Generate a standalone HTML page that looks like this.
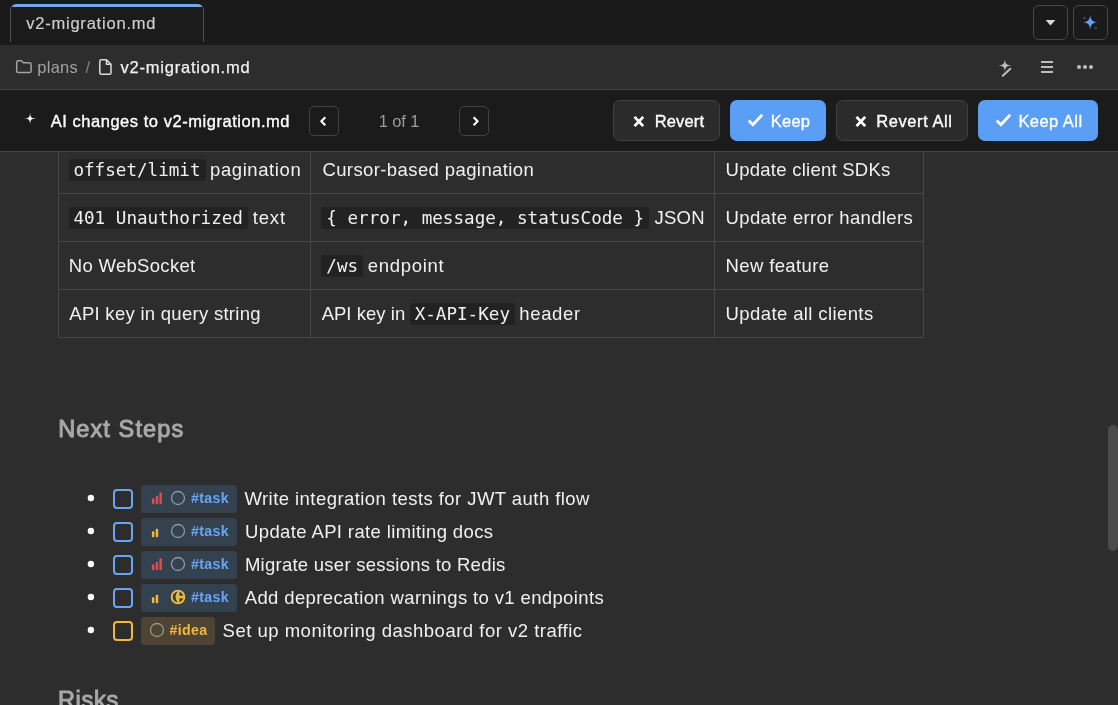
<!DOCTYPE html>
<html><head><meta charset="utf-8">
<style>
*{box-sizing:border-box;margin:0;padding:0}
html,body{width:1118px;height:705px;overflow:hidden;background:#2d2d2d}
body{font-family:"Liberation Sans",sans-serif;color:#f0f0f0;position:relative}
#txt{position:absolute;left:0;top:0;width:1118px;height:705px;will-change:transform}
.abs{position:absolute}
.t{position:absolute;white-space:nowrap;line-height:1}
.code{position:absolute;height:21.600px;background:#222222;border-radius:3px;font-family:"DejaVu Sans Mono","Liberation Mono",monospace;font-size:17.5px;line-height:21px;color:#f1f1f1;text-align:center;white-space:pre}
#topbar{left:0;top:0;width:1118px;height:45px;background:#1a1a1a}
#tab{left:10px;top:4px;width:194px;height:38px;background:#1b1b1b;border:1px solid #515151;border-bottom:none;border-top:none;border-radius:6px 6px 0 0;overflow:hidden}
#tab:before{content:"";position:absolute;left:0;top:0;right:0;height:2.500px;background:#78a5e8;box-shadow:0 1px 0 #0d1a30}
.sqbtn{width:35px;height:35px;border:1px solid #484848;border-radius:6px;background:#1a1a1a}
#crumb{left:0;top:45px;width:1118px;height:45px;background:#2d2d2d;border-bottom:1px solid #424242}
#aibar{left:0;top:90px;width:1118px;height:62px;background:#1b1b1b;border-bottom:1px solid #454545}
.navbtn{width:30px;height:30px;border:1px solid #424242;border-radius:5px;background:#1b1b1b;top:106px}
.btn{height:41px;border-radius:7px;top:100px}
.btn.dark{background:#2b2b2b;border:1px solid #414141}
.btn.blue{background:#5a9ef5}
.hl{background:#474747;height:1px;left:58px;width:866px}
.vl{background:#474747;width:1px;top:152px;height:186px}
.bullet{width:6.4px;height:6.4px;border-radius:50%;background:#f0f0f0;left:87.7px}
.cb{left:113px;width:20px;height:20px;border:2px solid #69a5f3;border-radius:4px}
.cb.y{border-color:#f2b83c}
.pill{left:141px;height:28px;border-radius:3.500px;background:#34414f}
.pill.y{background:#4e4433}
</style></head><body>

<div id="topbar" class="abs"></div>
<div id="tab" class="abs"></div>
<div class="abs sqbtn" style="left:1033px;top:5px">
  <svg class="abs" style="left:-1px;top:-1px" width="35" height="35" viewBox="0 0 35 35"><path d="M12.600 15h9.800l-4.900 5.600z" fill="#d8d8d8"/></svg>
</div>
<div class="abs sqbtn" style="left:1073px;top:5px">
  <svg class="abs" style="left:-1px;top:-1px" width="35" height="35" viewBox="0 0 35 35"><path d="M17.20 9.80C17.61 14.83 19.38 16.76 24.00 17.20C19.38 17.64 17.61 19.57 17.20 24.60C16.79 19.57 15.02 17.64 10.40 17.20C15.02 16.76 16.79 14.83 17.20 9.80z" fill="#5ea2f7"/><circle cx="11.3" cy="13" r="1.1" fill="#3f5f8f"/><circle cx="22.800" cy="23" r="1.100" fill="#3f5f8f"/></svg>
</div>

<div id="crumb" class="abs"></div>
<svg class="abs" style="left:15px;top:59px" width="18" height="16" viewBox="0 0 18 16"><path d="M1.700 3.300c0-.9.700-1.600 1.600-1.600h3.200l1.800 2h6.200c.9 0 1.600.7 1.600 1.600v6.700c0 .9-.7 1.600-1.600 1.600H3.300c-.9 0-1.600-.7-1.600-1.600z" fill="none" stroke="#a3a3a3" stroke-width="1.500" stroke-linejoin="round"/></svg>
<svg class="abs" style="left:98px;top:58px" width="16" height="18" viewBox="0 0 16 18"><path d="M3.300 1.750h5.200l4.500 4.500v8.500c0 .8-.7 1.500-1.500 1.500h-8.200c-.8 0-1.500-.7-1.500-1.500v-11.500c0-.8.700-1.500 1.500-1.500z M8.500 1.750v4.500h4.500" fill="none" stroke="#dcdcdc" stroke-width="1.500" stroke-linejoin="round"/></svg>
<svg class="abs" style="left:995px;top:55px" width="24" height="26" viewBox="0 0 24 26"><path d="M9.90 4.00C10.16 8.74 11.59 10.14 16.40 10.40C11.59 10.66 10.16 12.06 9.90 16.80C9.64 12.06 8.21 10.66 3.40 10.40C8.21 10.14 9.64 8.74 9.90 4.00z" fill="#bdbdbd"/><path d="M7.800 20.700l7.500-6.900" stroke="#bdbdbd" stroke-width="2.100" stroke-linecap="round"/></svg>
<div class="abs" style="left:1041px;top:61px;width:12px;height:2px;background:#bdbdbd"></div>
<div class="abs" style="left:1041px;top:66px;width:12px;height:2px;background:#bdbdbd"></div>
<div class="abs" style="left:1041px;top:71px;width:12px;height:2px;background:#bdbdbd"></div>
<div class="abs" style="left:1077px;top:65px;width:3.800px;height:3.800px;border-radius:50%;background:#bdbdbd"></div>
<div class="abs" style="left:1083px;top:65px;width:3.800px;height:3.800px;border-radius:50%;background:#bdbdbd"></div>
<div class="abs" style="left:1089px;top:65px;width:3.800px;height:3.800px;border-radius:50%;background:#bdbdbd"></div>

<div id="aibar" class="abs"></div>
<svg class="abs" style="left:22px;top:111px" width="16" height="16" viewBox="0 0 16 16"><path d="M8.10 1.50C8.34 6.30 9.30 7.26 14.10 7.50C9.30 7.74 8.34 8.70 8.10 13.50C7.86 8.70 6.90 7.74 2.10 7.50C6.90 7.26 7.86 6.30 8.10 1.50z" fill="#fff"/></svg>
<div class="abs navbtn" style="left:309px"><svg class="abs" style="left:8px;top:8px" width="12" height="12" viewBox="0 0 12 12"><path d="M7.300 2.200L3.300 6.200l4 4" fill="none" stroke="#fff" stroke-width="2.200" stroke-linejoin="round"/></svg></div>
<div class="abs navbtn" style="left:459px"><svg class="abs" style="left:8px;top:8px" width="12" height="12" viewBox="0 0 12 12"><path d="M5.600 2.200l4 4-4 4" fill="none" stroke="#fff" stroke-width="2.200" stroke-linejoin="round"/></svg></div>

<div class="abs btn dark" style="left:613px;width:107px">
  <svg class="abs" style="left:18.5px;top:14.4px" width="12" height="13" viewBox="0 0 12 13"><path d="M1.500 1.900l8.700 9.200M10.200 1.900l-8.700 9.200" stroke="#fff" stroke-width="2.800"/></svg>
</div>
<div class="abs btn blue" style="left:730px;width:96px">
  <svg class="abs" style="left:16.5px;top:13.3px" width="17" height="14" viewBox="0 0 17 14"><path d="M1.700 7.600l4.200 4.200L15.200 1.800" fill="none" stroke="#fff" stroke-width="2.800"/></svg>
</div>
<div class="abs btn dark" style="left:836px;width:132px">
  <svg class="abs" style="left:17.7px;top:14.4px" width="12" height="13" viewBox="0 0 12 13"><path d="M1.500 1.900l8.700 9.200M10.200 1.900l-8.700 9.200" stroke="#fff" stroke-width="2.800"/></svg>
</div>
<div class="abs btn blue" style="left:978px;width:120px">
  <svg class="abs" style="left:16.5px;top:13.3px" width="17" height="14" viewBox="0 0 17 14"><path d="M1.700 7.600l4.200 4.200L15.200 1.800" fill="none" stroke="#fff" stroke-width="2.800"/></svg>
</div>

<!-- table lines -->
<div class="abs vl" style="left:58px"></div>
<div class="abs vl" style="left:310px"></div>
<div class="abs vl" style="left:714px"></div>
<div class="abs vl" style="left:923px"></div>
<div class="abs hl" style="top:193px"></div>
<div class="abs hl" style="top:241px"></div>
<div class="abs hl" style="top:289px"></div>
<div class="abs hl" style="top:337px"></div>

<svg class="abs" style="left:86px;top:493.1px" width="10" height="10" viewBox="0 0 10 10"><circle cx="4.900" cy="5" r="3.200" fill="#fafafa"/></svg>
<div class="abs cb" style="top:489.0px"></div>
<div class="abs pill" style="top:485.0px;width:96px"></div>
<svg class="abs" style="left:151px;top:490.9px" width="12" height="14" viewBox="0 0 12 14"><rect x="0.900" y="7.200" width="2.500" height="6" rx="1" fill="#e5484d"/><rect x="4.700" y="4.800" width="2.500" height="8.400" rx="1" fill="#e5484d"/><rect x="8.400" y="1.200" width="2.500" height="12" rx="1" fill="#e5484d"/></svg>
<svg class="abs" style="left:170.2px;top:490.1px" width="16" height="16" viewBox="0 0 16 16"><circle cx="8" cy="8" r="6.500" fill="none" stroke="#8e98a6" stroke-width="1.300"/></svg>
<svg class="abs" style="left:86px;top:526.1px" width="10" height="10" viewBox="0 0 10 10"><circle cx="4.900" cy="5" r="3.200" fill="#fafafa"/></svg>
<div class="abs cb" style="top:522.0px"></div>
<div class="abs pill" style="top:518.0px;width:96px"></div>
<svg class="abs" style="left:151px;top:523.9px" width="12" height="14" viewBox="0 0 12 14"><rect x="0.900" y="7.200" width="2.500" height="6" rx="1" fill="#f2b83c"/><rect x="4.700" y="4.800" width="2.500" height="8.400" rx="1" fill="#f2b83c"/></svg>
<svg class="abs" style="left:170.2px;top:523.1px" width="16" height="16" viewBox="0 0 16 16"><circle cx="8" cy="8" r="6.500" fill="none" stroke="#8e98a6" stroke-width="1.300"/></svg>
<svg class="abs" style="left:86px;top:559.1px" width="10" height="10" viewBox="0 0 10 10"><circle cx="4.900" cy="5" r="3.200" fill="#fafafa"/></svg>
<div class="abs cb" style="top:555.0px"></div>
<div class="abs pill" style="top:551.0px;width:96px"></div>
<svg class="abs" style="left:151px;top:556.9px" width="12" height="14" viewBox="0 0 12 14"><rect x="0.900" y="7.200" width="2.500" height="6" rx="1" fill="#e5484d"/><rect x="4.700" y="4.800" width="2.500" height="8.400" rx="1" fill="#e5484d"/><rect x="8.400" y="1.200" width="2.500" height="12" rx="1" fill="#e5484d"/></svg>
<svg class="abs" style="left:170.2px;top:556.1px" width="16" height="16" viewBox="0 0 16 16"><circle cx="8" cy="8" r="6.500" fill="none" stroke="#8e98a6" stroke-width="1.300"/></svg>
<svg class="abs" style="left:86px;top:592.1px" width="10" height="10" viewBox="0 0 10 10"><circle cx="4.900" cy="5" r="3.200" fill="#fafafa"/></svg>
<div class="abs cb" style="top:588.0px"></div>
<div class="abs pill" style="top:584.0px;width:96px"></div>
<svg class="abs" style="left:151px;top:589.9px" width="12" height="14" viewBox="0 0 12 14"><rect x="0.900" y="7.200" width="2.500" height="6" rx="1" fill="#f2b83c"/><rect x="4.700" y="4.800" width="2.500" height="8.400" rx="1" fill="#f2b83c"/></svg>
<svg class="abs" style="left:170.2px;top:589.1px" width="16" height="16" viewBox="0 0 16 16"><circle cx="8" cy="8" r="6.350" fill="none" stroke="#efb93f" stroke-width="1.900"/><path d="M8.600 1.800Q2.400 8 8.600 14.200z" fill="#efb93f"/><path d="M8.400 1.800v12.400" stroke="#efb93f" stroke-width="2"/><path d="M8 8h6.200" stroke="#efb93f" stroke-width="2.500"/></svg>
<svg class="abs" style="left:86px;top:625.1px" width="10" height="10" viewBox="0 0 10 10"><circle cx="4.900" cy="5" r="3.200" fill="#fafafa"/></svg>
<div class="abs cb y" style="top:621.0px"></div>
<div class="abs pill y" style="top:617.0px;width:74px"></div>
<svg class="abs" style="left:149px;top:622.1px" width="16" height="16" viewBox="0 0 16 16"><circle cx="8" cy="8" r="6.500" fill="none" stroke="#9a948a" stroke-width="1.300"/></svg>

<div class="abs" style="left:1107.800px;top:424.600px;width:10.600px;height:126.500px;border-radius:5.300px;background:#4b4b4b"></div>

<div id="txt">
<div class="code" style="left:409.70px;top:303.00px;width:105.20px;"></div>
<div class="code" style="left:321.40px;top:255.00px;width:41.70px;"></div>
<div class="code" style="left:321.40px;top:207.00px;width:328.00px;"></div>
<div class="code" style="left:68.50px;top:207.00px;width:179.10px;"></div>
<div class="code" style="left:68.50px;top:159.00px;width:137.20px;"></div>
<span id="t_tab" class="t" style="left:26.14px;top:15.23px;font-size:16.5px;color:#d0d0d0;letter-spacing:0.790px;-webkit-text-stroke:0.15px #d0d0d0;">v2-migration.md</span>
<span id="t_plans" class="t" style="left:37.30px;top:59.13px;font-size:16.5px;color:#a3a3a3;letter-spacing:0.260px;">plans</span>
<span id="t_slash" class="t" style="left:85.38px;top:59.13px;font-size:16.5px;color:#808080;letter-spacing:0.000px;">/</span>
<span id="t_file" class="t" style="left:120.54px;top:59.13px;font-size:16.5px;color:#f2f2f2;letter-spacing:0.773px;-webkit-text-stroke:0.25px #f2f2f2;">v2-migration.md</span>
<span id="t_ai" class="t" style="left:50.70px;top:113.03px;font-size:16.5px;color:#ffffff;letter-spacing:0.537px;-webkit-text-stroke:0.35px #ffffff;">AI changes to v2-migration.md</span>
<span id="t_1of1" class="t" style="left:378.84px;top:113.03px;font-size:16.5px;color:#9c9c9c;letter-spacing:-0.156px;">1 of 1</span>
<span id="t_rev" class="t" style="left:654.63px;top:113.03px;font-size:16.5px;color:#ffffff;letter-spacing:0.156px;-webkit-text-stroke:0.35px #ffffff;">Revert</span>
<span id="t_keep" class="t" style="left:770.84px;top:113.03px;font-size:16.5px;color:#ffffff;letter-spacing:0.218px;-webkit-text-stroke:0.35px #ffffff;">Keep</span>
<span id="t_revall" class="t" style="left:876.36px;top:113.03px;font-size:16.5px;color:#ffffff;letter-spacing:0.551px;-webkit-text-stroke:0.35px #ffffff;">Revert All</span>
<span id="t_keepall" class="t" style="left:1018.38px;top:113.03px;font-size:16.5px;color:#ffffff;letter-spacing:0.456px;-webkit-text-stroke:0.35px #ffffff;">Keep All</span>
<span id="c11" class="t" style="left:210.08px;top:161.04px;font-size:18.5px;color:#f1f1f1;letter-spacing:0.579px;">pagination</span>
<span id="c12" class="t" style="left:322.39px;top:161.04px;font-size:18.5px;color:#f1f1f1;letter-spacing:0.401px;">Cursor-based pagination</span>
<span id="c13" class="t" style="left:725.62px;top:161.04px;font-size:18.5px;color:#f1f1f1;letter-spacing:0.253px;">Update client SDKs</span>
<span id="c21" class="t" style="left:252.84px;top:209.04px;font-size:18.5px;color:#f1f1f1;letter-spacing:0.799px;">text</span>
<span id="c22" class="t" style="left:654.59px;top:209.04px;font-size:18.5px;color:#f1f1f1;letter-spacing:0.194px;">JSON</span>
<span id="c23" class="t" style="left:725.62px;top:209.04px;font-size:18.5px;color:#f1f1f1;letter-spacing:0.358px;">Update error handlers</span>
<span id="c31" class="t" style="left:68.76px;top:257.04px;font-size:18.5px;color:#f1f1f1;letter-spacing:0.306px;">No WebSocket</span>
<span id="c32" class="t" style="left:367.75px;top:257.04px;font-size:18.5px;color:#f1f1f1;letter-spacing:0.697px;">endpoint</span>
<span id="c33" class="t" style="left:725.50px;top:257.04px;font-size:18.5px;color:#f1f1f1;letter-spacing:0.374px;">New feature</span>
<span id="c41" class="t" style="left:69.29px;top:305.04px;font-size:18.5px;color:#f1f1f1;letter-spacing:0.281px;">API key in query string</span>
<span id="c42a" class="t" style="left:321.64px;top:305.04px;font-size:18.5px;color:#f1f1f1;letter-spacing:0.031px;">API key in</span>
<span id="c42b" class="t" style="left:519.37px;top:305.04px;font-size:18.5px;color:#f1f1f1;letter-spacing:0.616px;">header</span>
<span id="c43" class="t" style="left:725.62px;top:305.04px;font-size:18.5px;color:#f1f1f1;letter-spacing:0.391px;">Update all clients</span>
<span id="l1" class="t" style="left:244.45px;top:489.64px;font-size:18.5px;color:#f1f1f1;letter-spacing:0.442px;">Write integration tests for JWT auth flow</span>
<span id="l2" class="t" style="left:245.04px;top:522.64px;font-size:18.5px;color:#f1f1f1;letter-spacing:0.373px;">Update API rate limiting docs</span>
<span id="l3" class="t" style="left:244.90px;top:555.64px;font-size:18.5px;color:#f1f1f1;letter-spacing:0.258px;">Migrate user sessions to Redis</span>
<span id="l4" class="t" style="left:244.71px;top:588.64px;font-size:18.5px;color:#f1f1f1;letter-spacing:0.370px;">Add deprecation warnings to v1 endpoints</span>
<span id="l5" class="t" style="left:222.55px;top:621.64px;font-size:18.5px;color:#f1f1f1;letter-spacing:0.501px;">Set up monitoring dashboard for v2 traffic</span>
<span id="g1" class="t" style="left:190.93px;top:491.38px;font-size:14.2px;color:#69a5f3;letter-spacing:0.389px;font-weight:bold;">#task</span>
<span id="g2" class="t" style="left:190.93px;top:524.38px;font-size:14.2px;color:#69a5f3;letter-spacing:0.389px;font-weight:bold;">#task</span>
<span id="g3" class="t" style="left:190.93px;top:557.38px;font-size:14.2px;color:#69a5f3;letter-spacing:0.389px;font-weight:bold;">#task</span>
<span id="g4" class="t" style="left:190.93px;top:590.38px;font-size:14.2px;color:#69a5f3;letter-spacing:0.389px;font-weight:bold;">#task</span>
<span id="g5" class="t" style="left:169.54px;top:623.38px;font-size:14.2px;color:#f2b83c;letter-spacing:0.313px;font-weight:bold;">#idea</span>
<span id="h1" class="t" style="left:58.14px;top:418.11px;font-size:23.5px;color:#a8a8a8;letter-spacing:1.122px;-webkit-text-stroke:1.0px #a8a8a8;">Next Steps</span>
<span id="h2" class="t" style="left:57.89px;top:689.11px;font-size:23.5px;color:#a8a8a8;letter-spacing:0.752px;-webkit-text-stroke:1.0px #a8a8a8;">Risks</span>
<span id="k1t" class="t" style="left:73.45px;top:161.80px;font-size:17.6px;color:#f1f1f1;letter-spacing:0.000px;font-family:'DejaVu Sans Mono','Liberation Mono',monospace;white-space:pre;">offset/limit</span>
<span id="k2t" class="t" style="left:73.45px;top:209.80px;font-size:17.6px;color:#f1f1f1;letter-spacing:0.000px;font-family:'DejaVu Sans Mono','Liberation Mono',monospace;white-space:pre;">401 Unauthorized</span>
<span id="k3t" class="t" style="left:326.35px;top:209.80px;font-size:17.6px;color:#f1f1f1;letter-spacing:0.000px;font-family:'DejaVu Sans Mono','Liberation Mono',monospace;white-space:pre;">{ error, message, statusCode }</span>
<span id="k4t" class="t" style="left:326.35px;top:257.80px;font-size:17.6px;color:#f1f1f1;letter-spacing:0.000px;font-family:'DejaVu Sans Mono','Liberation Mono',monospace;white-space:pre;">/ws</span>
<span id="k5t" class="t" style="left:414.65px;top:305.80px;font-size:17.6px;color:#f1f1f1;letter-spacing:0.000px;font-family:'DejaVu Sans Mono','Liberation Mono',monospace;white-space:pre;">X-API-Key</span>
</div>
</body></html>
